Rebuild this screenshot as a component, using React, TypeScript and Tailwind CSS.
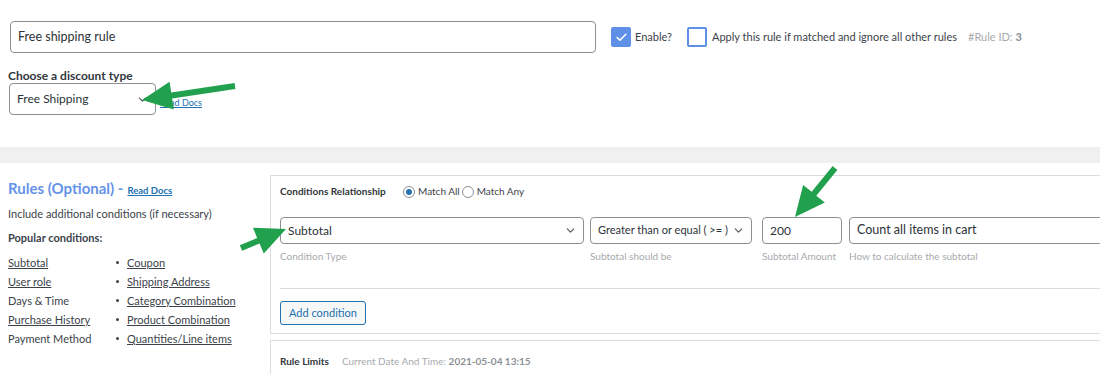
import { Check, ChevronDown } from 'lucide-react'

const leftA = [
  { t: 'Subtotal', link: true },
  { t: 'User role', link: true },
  { t: 'Days & Time', link: false },
  { t: 'Purchase History', link: true },
  { t: 'Payment Method', link: false },
]
const leftB = ['Coupon', 'Shipping Address', 'Category Combination', 'Product Combination', 'Quantities/Line items']

function Arrow({ x1, y1, x2, y2 }: { x1: number; y1: number; x2: number; y2: number }) {
  // shaft + triangular head, pointing from (x1,y1) toward (x2,y2)
  const dx = x2 - x1
  const dy = y2 - y1
  const len = Math.hypot(dx, dy)
  const ux = dx / len
  const uy = dy / len
  const head = 30
  const bx = x2 - ux * head
  const by = y2 - uy * head
  const px = -uy
  const py = ux
  const hw = 14
  const sw = 3
  const pts = [
    [x1 + px * sw, y1 + py * sw],
    [bx + px * sw, by + py * sw],
    [bx + px * hw, by + py * hw],
    [x2, y2],
    [bx - px * hw, by - py * hw],
    [bx - px * sw, by - py * sw],
    [x1 - px * sw, y1 - py * sw],
  ]
    .map((p) => p.join(','))
    .join(' ')
  return <polygon points={pts} fill="#21a04d" />
}

export default function App() {
  return (
    <div className="relative h-[374px] w-[1100px] overflow-hidden bg-white font-['Lato',sans-serif] text-[#3c434a]">
      <div className="h-[147px] pt-[21px]">
        <div className="flex items-center">
          <div className="ml-[10px] flex h-[32px] w-[586px] items-center rounded-[4px] border border-[#8c8f94] px-[7px] text-[12.5px] text-[#2c3338]">
            Free shipping rule
          </div>
          <div className="ml-[15px] flex h-[20px] w-[20px] items-center justify-center rounded-[2px] bg-[#5f90e8]">
            <Check size={13} strokeWidth={3} className="text-white" />
          </div>
          <span className="ml-[4px] text-[11px]">Enable?</span>
          <div className="ml-[15px] h-[20px] w-[20px] rounded-[2px] border-2 border-[#5f90e8] bg-white" />
          <span className="ml-[5px] text-[11px]">Apply this rule if matched and ignore all other rules</span>
          <span className="ml-[11px] text-[11px] text-[#a7aaad]">
            #Rule ID: <b className="text-[#8c8f94]">3</b>
          </span>
        </div>
        <div className="ml-[8px] mt-[16px] text-[12px] font-bold leading-[14px] text-[#32373c]">
          Choose a discount type
        </div>
        <div className="flex items-end">
          <div className="ml-[9px] flex h-[32px] w-[147px] items-center justify-between rounded-[4px] border border-[#8c8f94] pl-[7px] pr-[6px] text-[12px] text-[#2c3338]">
            Free Shipping
            <ChevronDown size={13} strokeWidth={2} className="text-[#50575e]" />
          </div>
          <a className="mb-[6px] ml-[4px] text-[9px] text-[#2271b1] underline">Read Docs</a>
        </div>
      </div>

      <div className="h-[16px] bg-[#f0f0f1]" />

      <div className="flex pt-[12px]">
        <div className="w-[270px] shrink-0 pl-[8px]">
          <div className="mt-[2px] flex items-baseline">
            <span className="text-[15px] font-bold text-[#6593e8]">Rules (Optional) -</span>
            <a className="ml-[4px] text-[9.5px] font-bold text-[#2271b1] underline">Read Docs</a>
          </div>
          <div className="mt-[6px] text-[11px]">Include additional conditions (if necessary)</div>
          <div className="mt-[8px] text-[11px] font-bold">Popular conditions:</div>
          <div className="mt-[6px] flex text-[11px] leading-[19px]">
            <div className="w-[108px]">
              {leftA.map((r) => (
                <div key={r.t} className={r.link ? 'underline' : ''}>
                  {r.t}
                </div>
              ))}
            </div>
            <div>
              {leftB.map((r) => (
                <div key={r} className="flex items-center">
                  <span className="mr-[8px] h-[3px] w-[3px] rounded-full bg-[#3c434a]" />
                  <span className="underline">{r}</span>
                </div>
              ))}
            </div>
          </div>
        </div>

        <div className="flex-1">
          <div className="h-[159px] border-y border-l border-[#dcdcde] pl-[9px]">
            <div className="mt-[8px] flex items-center text-[10px]">
              <span className="w-[123px] font-bold text-[#32373c]">Conditions Relationship</span>
              <span className="flex h-[12px] w-[12px] items-center justify-center rounded-full border border-[#8c8f94]">
                <span className="h-[6px] w-[6px] rounded-full bg-[#2271b1]" />
              </span>
              <span className="ml-[3px]">Match All</span>
              <span className="ml-[2px] h-[12px] w-[12px] rounded-full border border-[#8c8f94]" />
              <span className="ml-[3px]">Match Any</span>
            </div>
            <div className="mt-[18px] flex text-[12px] text-[#2c3338]">
              <div className="w-[304px]">
                <div className="flex h-[27px] items-center justify-between rounded-[4px] border border-[#8c8f94] pl-[7px] pr-[6px]">
                  Subtotal
                  <ChevronDown size={13} className="text-[#50575e]" />
                </div>
                <div className="mt-[5px] text-[10px] text-[#a7aaad]">Condition Type</div>
              </div>
              <div className="ml-[6px] w-[162px]">
                <div className="flex h-[27px] items-center justify-between whitespace-nowrap rounded-[4px] border border-[#8c8f94] pl-[7px] pr-[6px] text-[11px]">
                  Greater than or equal ( &gt;= )
                  <ChevronDown size={13} className="text-[#50575e]" />
                </div>
                <div className="mt-[5px] text-[10px] text-[#a7aaad]">Subtotal should be</div>
              </div>
              <div className="ml-[10px] w-[80px]">
                <div className="flex h-[27px] items-center rounded-[4px] border border-[#8c8f94] pl-[7px]">200</div>
                <div className="mt-[5px] text-[10px] text-[#a7aaad]">Subtotal Amount</div>
              </div>
              <div className="ml-[7px] w-[300px] shrink-0">
                <div className="flex h-[27px] items-center rounded-l-[4px] border border-[#8c8f94] pl-[7px] text-[12.5px]">
                  Count all items in cart
                </div>
                <div className="mt-[5px] text-[10px] text-[#a7aaad]">How to calculate the subtotal</div>
              </div>
            </div>
            <div className="mt-[24px] border-t border-[#dcdcde]" />
            <button className="mt-[12px] h-[24px] rounded-[3px] border border-[#2271b1] bg-[#f6f7f7] px-[8px] text-[11px] text-[#2271b1]">
              Add condition
            </button>
          </div>
          <div className="mt-[6px] h-[40px] border-t border-l border-[#dcdcde] pl-[9px] pt-[13px] text-[10px]">
            <span className="font-bold text-[#32373c]">Rule Limits</span>
            <span className="ml-[13px] text-[#a7aaad]">
              Current Date And Time: <b className="text-[#8c8f94]">2021-05-04 13:15</b>
            </span>
          </div>
        </div>
      </div>

      <svg className="pointer-events-none absolute left-0 top-0" width={1100} height={374}>
        <Arrow x1={235} y1={86} x2={142} y2={100} />
        <Arrow x1={241} y1={248} x2={286} y2={229} />
        <Arrow x1={835} y1={168} x2={795} y2={217} />
      </svg>
    </div>
  )
}
